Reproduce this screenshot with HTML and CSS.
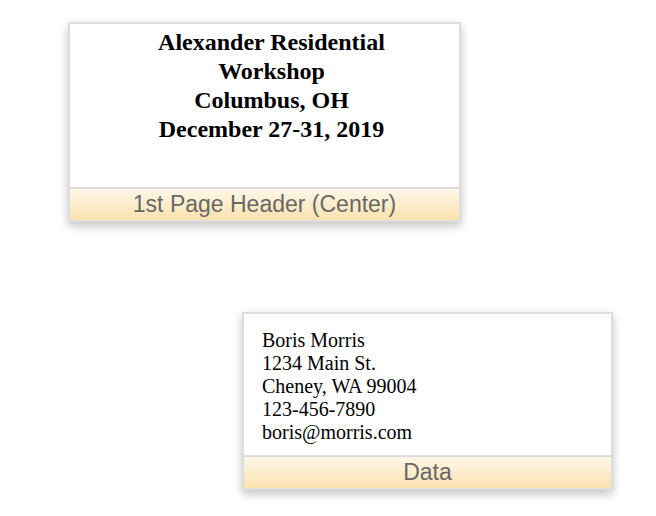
FILE: index.html
```html
<!DOCTYPE html>
<html>
<head>
<meta charset="utf-8">
<link rel="stylesheet" href="styles.css">
</head>
<body>
<div class="canvas">
  <div class="card card-header">
    <div class="card-body header-body">
      <div>Alexander Residential</div>
      <div>Workshop</div>
      <div>Columbus, OH</div>
      <div>December 27-31, 2019</div>
    </div>
    <div class="card-label">1st Page Header (Center)</div>
  </div>
  <div class="card card-data">
    <div class="card-body data-body">
      <div>Boris Morris</div>
      <div>1234 Main St.</div>
      <div>Cheney, WA 99004</div>
      <div>123-456-7890</div>
      <div>boris@morris.com</div>
    </div>
    <div class="card-label">Data</div>
  </div>
</div>
</body>
</html>
```
FILE: styles.css
```css
html, body {
  margin: 0;
  padding: 0;
  background: #ffffff;
}
.canvas {
  width: 656px;
  height: 516px;
  display: flex;
  flex-direction: column;
  align-items: flex-start;
  padding-top: 22px;
  box-sizing: border-box;
}
.card {
  border: 2px solid #dddddd;
  background: #ffffff;
  box-shadow: 0 4px 9px rgba(0, 0, 0, 0.24);
  display: flex;
  flex-direction: column;
}
.card-header {
  margin-left: 68px;
  width: 389px;
}
.card-data {
  margin-left: 242px;
  margin-top: 90px;
  width: 367px;
}
.card-body {
  color: #000;
  font-family: "Liberation Serif", "Times New Roman", serif;
  box-sizing: border-box;
  border-bottom: 2px solid #dddddd;
}
.header-body {
  height: 165px;
  padding: 4px 0 0 14px;
  font-size: 24px;
  line-height: 29px;
  font-weight: bold;
  text-align: center;
}
.data-body {
  height: 143px;
  padding: 15px 18px 0 18px;
  font-size: 20px;
  line-height: 23px;
}
.card-label {
  height: 31px;
  line-height: 31px;
  text-align: center;
  font-family: "Liberation Sans", Arial, sans-serif;
  font-size: 23px;
  color: #686868;
  background: linear-gradient(to bottom, #fef7e8, #fbe2ae);
}
```
